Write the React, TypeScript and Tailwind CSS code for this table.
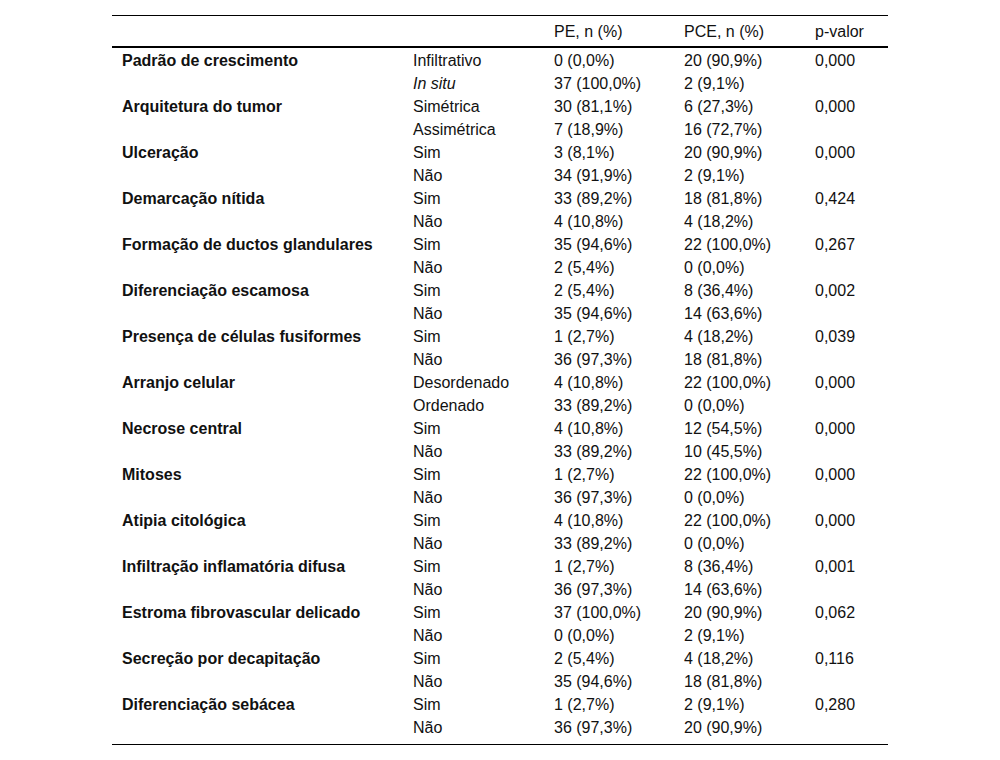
import React from "react";

type Row = { label: string; sub: [string, string, string, boolean?][]; p: string };

const rows: Row[] = [
  { label: "Padrão de crescimento", p: "0,000", sub: [["Infiltrativo", "0 (0,0%)", "20 (90,9%)"], ["In situ", "37 (100,0%)", "2 (9,1%)", true]] },
  { label: "Arquitetura do tumor", p: "0,000", sub: [["Simétrica", "30 (81,1%)", "6 (27,3%)"], ["Assimétrica", "7 (18,9%)", "16 (72,7%)"]] },
  { label: "Ulceração", p: "0,000", sub: [["Sim", "3 (8,1%)", "20 (90,9%)"], ["Não", "34 (91,9%)", "2 (9,1%)"]] },
  { label: "Demarcação nítida", p: "0,424", sub: [["Sim", "33 (89,2%)", "18 (81,8%)"], ["Não", "4 (10,8%)", "4 (18,2%)"]] },
  { label: "Formação de ductos glandulares", p: "0,267", sub: [["Sim", "35 (94,6%)", "22 (100,0%)"], ["Não", "2 (5,4%)", "0 (0,0%)"]] },
  { label: "Diferenciação escamosa", p: "0,002", sub: [["Sim", "2 (5,4%)", "8 (36,4%)"], ["Não", "35 (94,6%)", "14 (63,6%)"]] },
  { label: "Presença de células fusiformes", p: "0,039", sub: [["Sim", "1 (2,7%)", "4 (18,2%)"], ["Não", "36 (97,3%)", "18 (81,8%)"]] },
  { label: "Arranjo celular", p: "0,000", sub: [["Desordenado", "4 (10,8%)", "22 (100,0%)"], ["Ordenado", "33 (89,2%)", "0 (0,0%)"]] },
  { label: "Necrose central", p: "0,000", sub: [["Sim", "4 (10,8%)", "12 (54,5%)"], ["Não", "33 (89,2%)", "10 (45,5%)"]] },
  { label: "Mitoses", p: "0,000", sub: [["Sim", "1 (2,7%)", "22 (100,0%)"], ["Não", "36 (97,3%)", "0 (0,0%)"]] },
  { label: "Atipia citológica", p: "0,000", sub: [["Sim", "4 (10,8%)", "22 (100,0%)"], ["Não", "33 (89,2%)", "0 (0,0%)"]] },
  { label: "Infiltração inflamatória difusa", p: "0,001", sub: [["Sim", "1 (2,7%)", "8 (36,4%)"], ["Não", "36 (97,3%)", "14 (63,6%)"]] },
  { label: "Estroma fibrovascular delicado", p: "0,062", sub: [["Sim", "37 (100,0%)", "20 (90,9%)"], ["Não", "0 (0,0%)", "2 (9,1%)"]] },
  { label: "Secreção por decapitação", p: "0,116", sub: [["Sim", "2 (5,4%)", "4 (18,2%)"], ["Não", "35 (94,6%)", "18 (81,8%)"]] },
  { label: "Diferenciação sebácea", p: "0,280", sub: [["Sim", "1 (2,7%)", "2 (9,1%)"], ["Não", "36 (97,3%)", "20 (90,9%)"]] },
];

const grid = "grid grid-cols-[291px_141px_130px_131px_1fr] pl-[10px]";

export default function App() {
  return (
    <div className="w-[1000px] h-[760px] bg-white pt-[15px] text-[#111] text-[16px] leading-[18px]" style={{ fontFamily: '"Liberation Sans", Arial, sans-serif' }}>
      <div className="ml-[112px] w-[776px]">
        <div className={`${grid} h-[33px] border-t border-black border-b-2 items-center pt-[1px]`}>
          <div></div>
          <div></div>
          <div>PE, n (%)</div>
          <div>PCE, n (%)</div>
          <div>p-valor</div>
        </div>
        <div className="border-b border-black pt-[1px] pb-[5px]">
          {rows.map((r) =>
            r.sub.map((s, i) => (
              <div key={r.label + i} className={`${grid} h-[23px] items-center pt-[1px]`}>
                <div className="font-bold">{i === 0 ? r.label : ""}</div>
                <div className={s[3] ? "italic" : ""}>{s[0]}</div>
                <div>{s[1]}</div>
                <div>{s[2]}</div>
                <div>{i === 0 ? r.p : ""}</div>
              </div>
            ))
          )}
        </div>
      </div>
    </div>
  );
}
